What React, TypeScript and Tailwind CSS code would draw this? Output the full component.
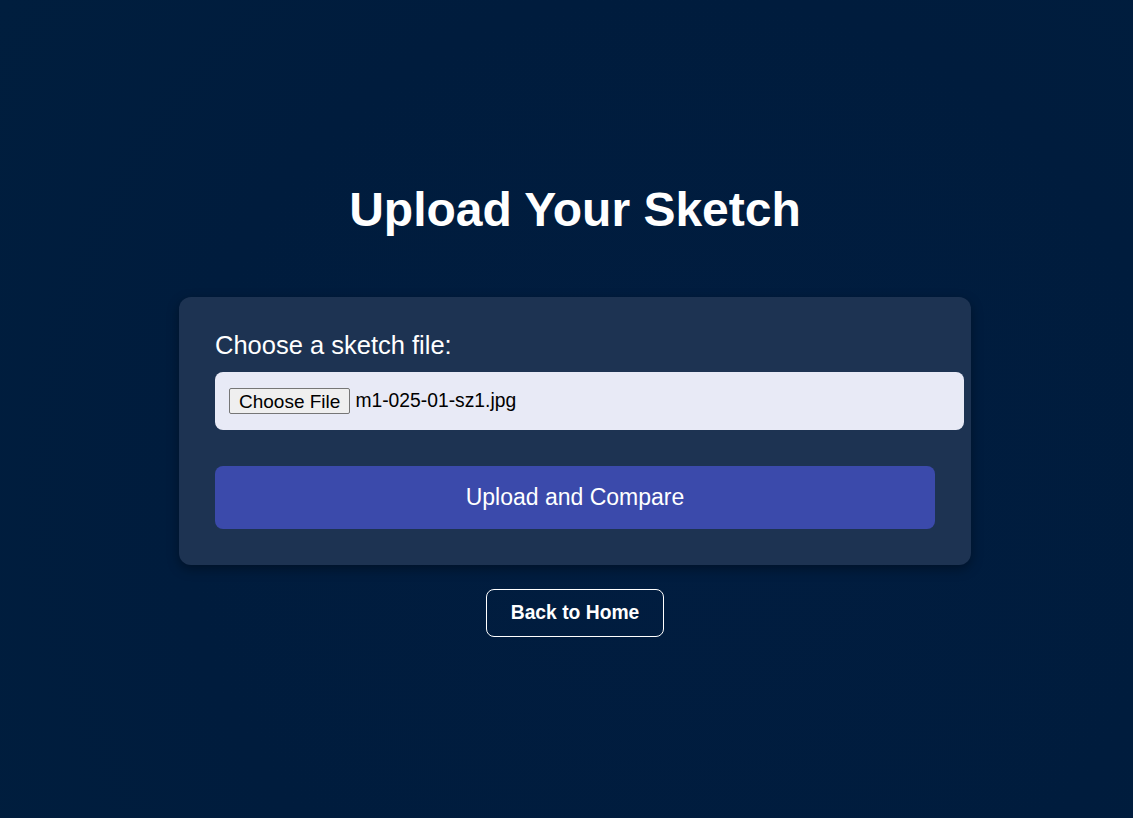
import React from "react";

const App: React.FC = () => {
  return (
    <div
      className="min-h-screen w-full bg-[#001f3f] bg-[radial-gradient(circle_at_60%_60%,#011d40_0%,#001c3d_60%,#001e3e_100%)] text-white flex flex-col items-center pl-[17px]"
      style={{ fontFamily: '"Liberation Sans", Arial, sans-serif' }}
    >
      {/* Heading */}
      <h1 className="mt-[181px] text-[48px] leading-[58px] font-bold">Upload Your Sketch</h1>

      {/* Upload card */}
      <div className="mt-[58px] w-[792px] bg-[#1d3352] rounded-[12px] shadow-[0_4px_12px_rgba(0,0,0,0.35)] pt-[32px] pb-[36px] px-[36px]">
        <label className="block text-[25.5px] leading-[32px] mb-[11px]">Choose a sketch file:</label>
        <div className="w-[749px] h-[58px] bg-[#e8eaf6] rounded-[8px] px-[14px] flex items-center gap-[5px] text-black text-[19.3px]">
          <span className="h-[26px] px-[9px] flex items-center bg-[#efefef] border border-[#767676] rounded-[2px] text-[19px] leading-none">
            Choose File
          </span>
          <span>m1-025-01-sz1.jpg</span>
        </div>
        <button className="mt-[36px] w-full h-[63px] bg-[#3b4aab] rounded-[8px] text-[23px] text-white">
          Upload and Compare
        </button>
      </div>

      {/* Back link */}
      <button className="mt-[24px] w-[178px] h-[48px] border border-white rounded-[8px] text-[19.3px] font-bold text-white">
        Back to Home
      </button>
    </div>
  );
};

export default App;
